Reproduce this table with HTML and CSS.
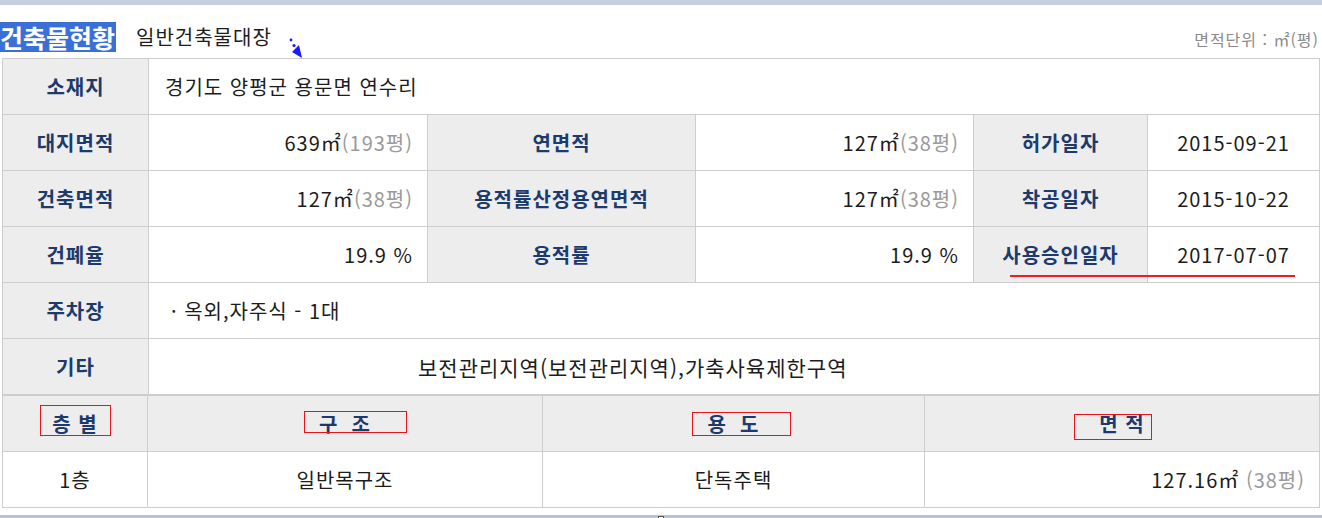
FILE: index.html
```html
<!DOCTYPE html>
<html lang="ko">
<head>
<meta charset="UTF-8">
<title>건축물현황</title>
<link rel="stylesheet" href="styles.css">
</head>
<body>
<div class="top-band"></div>

<!-- Title -->
<div class="head">
  <div class="title-wrap">
    <span class="title">건축물현황</span>
    <span class="sub">일반건축물대장</span>
  </div>
  <svg class="cursor" width="16" height="20" viewBox="0 0 16 20">
    <circle cx="3" cy="2" r="1.4" fill="#1a1aff"/>
    <circle cx="6" cy="7.5" r="1.6" fill="#1a1aff"/>
    <polygon points="4,14 11,7 14,20" fill="#1a1aff"/>
  </svg>
  <span class="unit">면적단위 : ㎡(평)</span>
</div>

<!-- Building info -->
<table class="info">
  <colgroup>
    <col style="width:146px"><col style="width:279px"><col style="width:268px">
    <col style="width:278px"><col style="width:174px"><col style="width:172px">
  </colgroup>
  <tr>
    <th>소재지</th>
    <td colspan="5" class="left">경기도 양평군 용문면 연수리</td>
  </tr>
  <tr>
    <th>대지면적</th>
    <td class="num">639㎡<span class="py">(193평)</span></td>
    <th>연면적</th>
    <td class="num">127㎡<span class="py">(38평)</span></td>
    <th>허가일자</th>
    <td class="date">2015-09-21</td>
  </tr>
  <tr>
    <th>건축면적</th>
    <td class="num">127㎡<span class="py">(38평)</span></td>
    <th>용적률산정용연면적</th>
    <td class="num">127㎡<span class="py">(38평)</span></td>
    <th>착공일자</th>
    <td class="date">2015-10-22</td>
  </tr>
  <tr>
    <th>건폐율</th>
    <td class="num">19.9 %</td>
    <th>용적률</th>
    <td class="num">19.9 %</td>
    <th class="underlined">사용승인일자<span class="red-line"></span></th>
    <td class="date">2017-07-07</td>
  </tr>
  <tr>
    <th>주차장</th>
    <td colspan="5" class="left parking">· 옥외,자주식 - 1대</td>
  </tr>
  <tr>
    <th>기타</th>
    <td colspan="5" class="etc">보전관리지역(보전관리지역),가축사육제한구역</td>
  </tr>
</table>

<!-- Floors -->
<table class="floors">
  <colgroup>
    <col style="width:145px"><col style="width:395px"><col style="width:382px"><col style="width:395px">
  </colgroup>
  <tr>
    <th class="mark mark-floor">층 별</th>
    <th class="mark mark-struct">구 &nbsp;조</th>
    <th class="mark mark-use">용 &nbsp;도</th>
    <th class="mark mark-area">면 적</th>
  </tr>
  <tr>
    <td class="center">1층</td>
    <td class="center">일반목구조</td>
    <td class="center">단독주택</td>
    <td class="num">127.16㎡ <span class="py">(38평)</span></td>
  </tr>
</table>

<div class="bottom-band"><span class="handle"></span></div>
</body>
</html>
```

FILE: styles.css
```css
/* General */
body {
  margin: 0;
  font-family: "Noto Sans CJK KR", "Noto Sans", sans-serif;
  color: #1c1c1c;
  background: #fff;
}
.top-band {
  height: 5px;
  background: #c6cfdf;
}
/* Title row */
.head {
  position: relative;
  height: 47px;
  display: flex;
  align-items: flex-end;
  justify-content: space-between;
  padding: 0 3px 6px 0;
}
.title-wrap {
  display: flex;
  align-items: center;
}
.title {
  background: #3b6fd8;
  color: #fff;
  font-size: 25px;
  font-weight: bold;
  line-height: 30px;
  padding: 0 1px 0 0;
}
.sub {
  margin-left: 20px;
  font-size: 20px;
  letter-spacing: 1px;
  line-height: 30px;
}
.cursor {
  position: absolute;
  left: 288px;
  top: 33px;
}
.unit {
  color: #8a8a8a;
  font-size: 16px;
  letter-spacing: 1px;
  line-height: 26px;
}
/* Tables */
table {
  border-collapse: collapse;
  table-layout: fixed;
  width: 1317px;
  margin-left: 2px;
}
th, td {
  border: 1px solid #cdcdcd;
  height: 55px;
  padding: 0;
  font-size: 20px;
  letter-spacing: 1px;
}
th {
  background: #ededed;
  color: #1d3a6c;
  font-weight: bold;
  text-align: center;
}
td.left {
  padding-left: 16px;
}
td.parking {
  padding-left: 22px;
}
td.num {
  text-align: right;
  padding-right: 14px;
}
td.date,
td.center {
  text-align: center;
}
td.etc {
  padding-left: 269px;
  font-size: 21px;
}
.py {
  color: #9a9a9a;
}
/* Annotations */
.underlined {
  position: relative;
}
.red-line {
  position: absolute;
  left: 36px;
  top: 48px;
  width: 285px;
  height: 2px;
  background: #ee1c25;
}
.mark {
  position: relative;
}
.mark::after {
  content: "";
  position: absolute;
  border: 1px solid #e8141c;
}
.mark-floor::after {
  left: 37px; top: 9px; width: 69px; height: 29px;
}
.mark-struct::after {
  left: 156px; top: 15px; width: 101px; height: 20px;
}
.mark-use::after {
  left: 149px; top: 16px; width: 97px; height: 22px;
}
.mark-area::after {
  left: 149px; top: 18px; width: 76px; height: 24px;
}
.bottom-band {
  position: relative;
  height: 5px;
  margin-top: 7px;
  background: #b6c2d7;
}
.handle {
  position: absolute;
  left: 658px;
  top: 1px;
  width: 4px;
  height: 6px;
  background: #fff;
  border: 1px solid #555;
}
```
